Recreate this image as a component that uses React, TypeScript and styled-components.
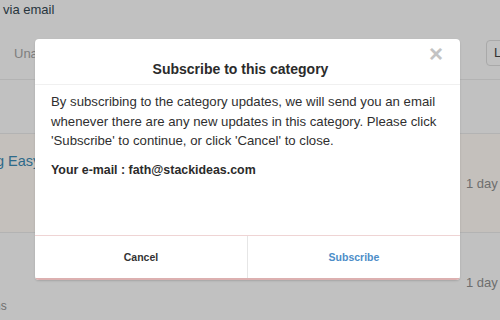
import React from "react"
import styled, { createGlobalStyle } from "styled-components"

const GlobalStyle = createGlobalStyle`
  html, body {
    margin: 0;
    padding: 0;
    background: #c1c1c1;
    font-family: "Liberation Sans", Arial, sans-serif;
  }
`

const Page = styled.div`
  position: relative;
  width: 500px;
  height: 320px;
  overflow: hidden;
  background: #c1c1c1;
`

const TopLine = styled.div`
  color: #27353d;
  font-size: 13px;
  padding: 2px 0 0 3px;
  height: 25px;
`

const Toolbar = styled.div`
  display: flex;
  align-items: center;
  justify-content: space-between;
  height: 52px;
  border-bottom: 1px solid #b3b3b3;
  padding-left: 14px;
`

const Tab = styled.span`
  color: #7e7e7e;
  font-size: 13px;
`

const SmallButton = styled.div`
  width: 28px;
  height: 26px;
  margin-right: -14px;
  margin-top: -1px;
  border: 1px solid #a9a9a9;
  border-radius: 4px;
  box-sizing: border-box;
  display: flex;
  align-items: center;
  padding-left: 7px;
  font-size: 13px;
  color: #333;
`

const Row = styled.div<{ $tinted?: boolean; $height: number; $last?: boolean }>`
  display: flex;
  align-items: center;
  justify-content: space-between;
  height: ${p => p.$height}px;
  background: ${p => (p.$tinted ? "#c4c0bc" : "transparent")};
  border-bottom: ${p => (p.$last ? "none" : "1px solid #b3b3b3")};
`

const PostTitle = styled.span`
  color: #2e6a8a;
  font-size: 14.5px;
  margin-left: -4px;
  margin-top: -44px;
  white-space: nowrap;
`

const Meta = styled.span<{ $offset?: number }>`
  color: #6e6e6e;
  font-size: 13px;
  margin-right: -23px;
  margin-top: ${p => p.$offset ?? 0}px;
  white-space: nowrap;
`

const Footnote = styled.div`
  color: #6e6e6e;
  font-size: 12px;
  margin-left: -6px;
`

const Modal = styled.div`
  position: absolute;
  left: 35px;
  top: 39px;
  width: 425px;
  height: 241px;
  background: #fff;
  border-radius: 4px;
  box-shadow: 0 1px 2px rgba(0, 0, 0, 0.15);
  display: flex;
  flex-direction: column;
  overflow: hidden;
`

const Header = styled.div`
  position: relative;
  height: 46px;
  border-bottom: 1px solid #f0f0f0;
  display: flex;
  align-items: center;
  justify-content: center;
  padding: 1px 14px 0 0;
  box-sizing: border-box;
`

const Title = styled.h3`
  margin: 14px 0 0;
  font-size: 14px;
  font-weight: bold;
  color: #2b2b2b;
`

const Close = styled.span`
  position: absolute;
  right: 17px;
  top: 1px;
  font-size: 24px;
  font-weight: bold;
  color: #c3c3c3;
  line-height: 28px;
`

const Body = styled.div`
  flex: 1;
  padding: 7px 16px 0;
  font-size: 13.2px;
  line-height: 19.5px;
  color: #2f2f2f;
`

const Paragraph = styled.p`
  margin: 0 0 10px;
`

const Strong = styled.p`
  margin: 0;
  font-size: 12.4px;
  font-weight: bold;
  color: #2b2b2b;
`

const Footer = styled.div`
  display: flex;
  height: 45px;
  border-top: 1px solid #efd4d4;
  border-bottom: 2px solid #dcb0b0;
  box-sizing: border-box;
`

const FooterButton = styled.div<{ $primary?: boolean }>`
  flex: 1;
  display: flex;
  align-items: center;
  justify-content: center;
  font-size: 10.5px;
  font-weight: bold;
  color: ${p => (p.$primary ? "#4d8dc8" : "#333")};
  & + & {
    border-left: 1px solid #e6e6e6;
  }
`

const App = () => (
  <>
    <GlobalStyle />
    <Page>
      <TopLine>via email</TopLine>
      <Toolbar>
        <Tab>Una</Tab>
        <SmallButton>L</SmallButton>
      </Toolbar>
      <Row $height={53} />
      <Row $tinted $height={98}>
        <PostTitle>g Easy</PostTitle>
        <Meta>1 day ago</Meta>
      </Row>
      <Row $height={66} $last>
        <span />
        <Meta $offset={32}>1 day ago</Meta>
      </Row>
      <Footnote>ns</Footnote>

      <Modal>
        <Header>
          <Title>Subscribe to this category</Title>
          <Close>×</Close>
        </Header>
        <Body>
          <Paragraph>
            By subscribing to the category updates, we will send you an email
            <br />
            whenever there are any new updates in this category. Please click
            <br />
            'Subscribe' to continue, or click 'Cancel' to close.
          </Paragraph>
          <Strong>Your e-mail : fath@stackideas.com</Strong>
        </Body>
        <Footer>
          <FooterButton>Cancel</FooterButton>
          <FooterButton $primary>Subscribe</FooterButton>
        </Footer>
      </Modal>
    </Page>
  </>
)

export default App
